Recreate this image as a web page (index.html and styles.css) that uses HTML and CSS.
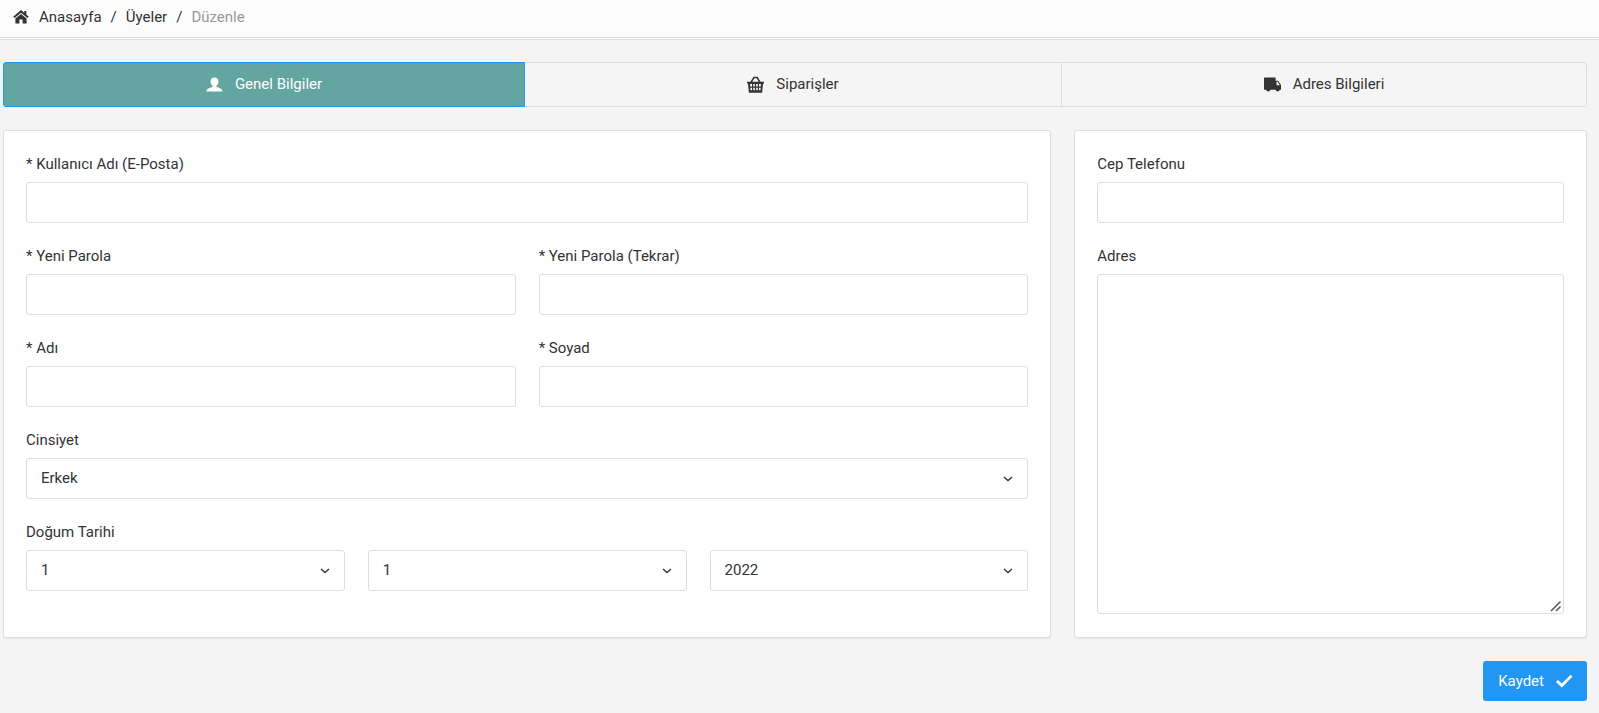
FILE: index.html
```html
<!DOCTYPE html>
<html lang="tr">
<head>
<meta charset="utf-8">
<meta name="viewport" content="width=device-width, initial-scale=1">
<title>Üye Düzenle</title>
<link rel="stylesheet" href="styles.css">
</head>
<body>
<nav class="breadcrumb" aria-label="Konum">
  <a class="crumb crumb-home" href="#">
    <svg class="icon-home" viewBox="0 0 16 16" aria-hidden="true"><path d="M8 1 0.200 7.700 1.600 9 8 3.700 14.400 9 15.800 7.700 13.300 5.500V2h-2v1.800z"/><path d="M8 5 2.400 9.600V14.500h4V10.500h3.200v4h4V9.600z"/></svg>
    <span>Anasayfa</span>
  </a>
  <span class="separator">/</span>
  <a class="crumb" href="#">Üyeler</a>
  <span class="separator">/</span>
  <span class="crumb-current">Düzenle</span>
</nav>

<main class="content">
  <div class="tabs" role="tablist">
    <button class="tab tab-active" type="button" role="tab" aria-selected="true">
      <svg class="icon" viewBox="0 0 18 18" aria-hidden="true"><path d="M9 1.500c-2.700 0-4.200 1.700-4.200 4.200 0 1.900.9 3.700 2.100 4.600v1.300C4 12.100.5 13.500.5 16.500h17c0-3-3.500-4.400-6.400-4.900v-1.300c1.200-.9 2.100-2.700 2.100-4.600 0-2.500-1.500-4.200-4.200-4.200z"/></svg>
      <span>Genel Bilgiler</span>
    </button>
    <button class="tab" type="button" role="tab" aria-selected="false">
      <svg class="icon" viewBox="0 0 18 18" aria-hidden="true"><path fill-rule="evenodd" d="M0 6h3.600L6.900.900h4.200L14.400 6H18v2h-1l-1 9.800H2L1 8H0zm5.500 0h7L10.200 2.400H7.800zM3.200 8.500l.2 2.500H5.300V8.500zM6.600 8.500V11h1.800V8.500zM9.700 8.500V11h1.800V8.500zM12.700 8.500V11h1.900l.2-2.500zM3.500 12.500l.2 2.500h1.600v-2.500zM6.600 12.500V15h1.800v-2.500zM9.700 12.500V15h1.800v-2.500zM12.700 12.500V15h1.600l.2-2.500z"/></svg>
      <span>Siparişler</span>
    </button>
    <button class="tab" type="button" role="tab" aria-selected="false">
      <svg class="icon" viewBox="0 0 18 18" aria-hidden="true"><path fill-rule="evenodd" d="M.8 1.500h10.700q.8 0 .8.800V5H15l3 4.500v5h-1.300a2.300 2.300 0 0 1-4.500 0H6.800a2.300 2.300 0 0 1-4.500 0H0V2.300q0-.8.800-.8zm12.500 4.700v3.600h3.500l-2.400-3.600z"/></svg>
      <span>Adres Bilgileri</span>
    </button>
  </div>

  <form class="form">
    <section class="card card-main">
      <div class="field span-6">
        <label for="username">* Kullanıcı Adı (E-Posta)</label>
        <input class="control" id="username" type="email">
      </div>
      <div class="field span-3">
        <label for="password">* Yeni Parola</label>
        <input class="control" id="password" type="password">
      </div>
      <div class="field span-3">
        <label for="password-repeat">* Yeni Parola (Tekrar)</label>
        <input class="control" id="password-repeat" type="password">
      </div>
      <div class="field span-3">
        <label for="first-name">* Adı</label>
        <input class="control" id="first-name" type="text">
      </div>
      <div class="field span-3">
        <label for="last-name">* Soyad</label>
        <input class="control" id="last-name" type="text">
      </div>
      <div class="field span-6">
        <label for="gender">Cinsiyet</label>
        <div class="select">
          <select class="control" id="gender"><option>Erkek</option><option>Kadın</option></select>
          <svg class="chevron" viewBox="0 0 10 6" aria-hidden="true"><path d="M1 1l4 3.500L9 1"/></svg>
        </div>
      </div>
      <div class="field span-6">
        <label for="birth-day">Doğum Tarihi</label>
        <div class="date">
          <div class="select">
            <select class="control" id="birth-day"><option>1</option><option>2</option></select>
            <svg class="chevron" viewBox="0 0 10 6" aria-hidden="true"><path d="M1 1l4 3.500L9 1"/></svg>
          </div>
          <div class="select">
            <select class="control" aria-label="Doğum ayı"><option>1</option><option>2</option></select>
            <svg class="chevron" viewBox="0 0 10 6" aria-hidden="true"><path d="M1 1l4 3.500L9 1"/></svg>
          </div>
          <div class="select">
            <select class="control" aria-label="Doğum yılı"><option>2022</option><option>2021</option></select>
            <svg class="chevron" viewBox="0 0 10 6" aria-hidden="true"><path d="M1 1l4 3.500L9 1"/></svg>
          </div>
        </div>
      </div>
    </section>

    <section class="card card-side">
      <div class="field">
        <label for="phone">Cep Telefonu</label>
        <input class="control" id="phone" type="tel">
      </div>
      <div class="field field-grow">
        <label for="address">Adres</label>
        <div class="area">
          <textarea class="control control-area" id="address"></textarea>
          <svg class="grip" viewBox="0 0 12 12" aria-hidden="true"><path d="M1 11 10.500 1.500M6 11l4.500-4.500"/></svg>
        </div>
      </div>
    </section>

    <div class="actions">
      <button class="save" type="button">
        <span>Kaydet</span>
        <svg class="icon" viewBox="0 0 18 18" aria-hidden="true"><path d="M15.600 2.700 6.800 11.500 2.900 7.900.9 9.900l5.900 5.700L17.500 4.600z"/></svg>
      </button>
    </div>
  </form>
</main>
</body>
</html>
```
FILE: styles.css
```css
* {
  box-sizing: border-box;
}

body {
  margin: 0;
  background: #f4f4f4;
  color: #333;
  font-family: Roboto, "Liberation Sans", sans-serif;
  font-size: 15px;
  line-height: 23px;
}

button,
input,
select,
textarea {
  font: inherit;
  color: inherit;
}

svg {
  fill: currentColor;
  flex: none;
}

.breadcrumb {
  display: flex;
  align-items: center;
  gap: 9px;
  height: 40px;
  padding: 0 13px 3px;
  background: #fcfcfc;
  border-bottom: 3px double #ddd;
}

.crumb {
  color: inherit;
  text-decoration: none;
}

.crumb-home {
  display: flex;
  align-items: center;
  gap: 10px;
}

.icon-home {
  width: 16px;
  height: 16px;
}

.crumb-current {
  color: #999;
}

.content {
  padding: 22px 12px 12px 3px;
}

.tabs {
  display: grid;
  grid-template-columns: 522fr 537fr 525fr;
  margin-bottom: 23px;
}

.tab {
  display: flex;
  align-items: center;
  justify-content: center;
  gap: 12px;
  height: 45px;
  padding: 0 16px;
  background: #f5f5f5;
  border: 1px solid #ddd;
  border-left-width: 0;
  cursor: pointer;
}

.tab:last-child {
  border-radius: 0 3px 3px 0;
}

.tab-active {
  background: #62a5a1;
  border: 1px solid #2196f3;
  border-radius: 3px 0 0 3px;
  color: #fff;
}

.icon {
  width: 18px;
  height: 18px;
}

.tab .icon {
  width: 17px;
  height: 17px;
}

.form {
  display: grid;
  grid-template-columns: repeat(12, minmax(0, 1fr));
  gap: 23px;
}

.card {
  padding: 23px 22px;
  background: #fff;
  border: 1px solid #ddd;
  border-radius: 3px;
  box-shadow: 0 1px 1px rgba(0, 0, 0, 0.05);
}

.card-main {
  grid-column: span 8;
  display: grid;
  grid-template-columns: repeat(6, minmax(0, 1fr));
  gap: 23px;
  padding-bottom: 46px;
}

.card-side {
  grid-column: span 4;
  display: flex;
  flex-direction: column;
  gap: 23px;
}

.span-3 {
  grid-column: span 3;
}

.span-6 {
  grid-column: span 6;
}

.field {
  display: flex;
  flex-direction: column;
  gap: 7px;
}

.field label {
  line-height: 21px;
}

.field-grow {
  flex: 1;
}

.control {
  display: block;
  width: 100%;
  height: 41px;
  padding: 0 14px;
  background: #fff;
  border: 1px solid #ddd;
  border-radius: 3px;
  appearance: none;
}

.area {
  position: relative;
  display: flex;
  flex: 1;
}

.control-area {
  height: auto;
  padding: 8px 14px;
  resize: vertical;
}

.control-area::-webkit-resizer {
  background: transparent;
}

.grip {
  position: absolute;
  right: 2px;
  bottom: 2px;
  width: 12px;
  height: 12px;
  fill: none;
  stroke: #555;
  stroke-width: 1.5;
  pointer-events: none;
}

.date {
  display: grid;
  grid-template-columns: repeat(3, minmax(0, 1fr));
  gap: 23px;
}

.select {
  position: relative;
}

.chevron {
  position: absolute;
  top: 18px;
  right: 15px;
  width: 10px;
  height: 6px;
  fill: none;
  stroke: #333;
  stroke-width: 1.4;
  pointer-events: none;
}

.actions {
  grid-column: 1 / -1;
  display: flex;
  justify-content: flex-end;
}

.save {
  display: flex;
  align-items: center;
  gap: 11px;
  height: 40px;
  padding: 0 14px 0 15px;
  background: #2196f3;
  border: 0;
  border-radius: 3px;
  color: #fff;
  cursor: pointer;
}
```
